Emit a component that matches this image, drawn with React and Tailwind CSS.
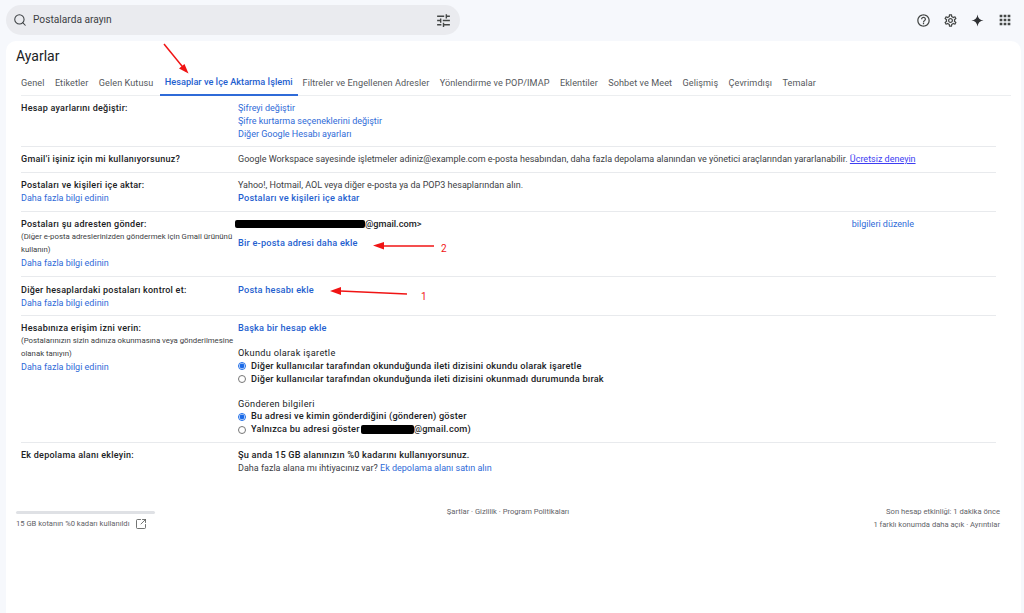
import { Search, SquareArrowOutUpRight } from 'lucide-react';
import { MdApps, MdOutlineHelpOutline, MdOutlineSettings, MdTune } from 'react-icons/md';

const tabs = [
  'Genel',
  'Etiketler',
  'Gelen Kutusu',
  'Hesaplar ve İçe Aktarma İşlemi',
  'Filtreler ve Engellenen Adresler',
  'Yönlendirme ve POP/IMAP',
  'Eklentiler',
  'Sohbet ve Meet',
  'Gelişmiş',
  'Çevrimdışı',
  'Temalar',
];

const Learn = () => <div className="text-[#2f6bd8]">Daha fazla bilgi edinin</div>;

const Label = ({ children }) => <div className="font-medium tracking-[0.25px] text-[#202124]">{children}</div>;

const Note = ({ children }) => <div className="text-[7.8px] text-[#3c4043]">{children}</div>;

const Action = ({ children }) => <div className="text-[9.2px] font-medium tracking-[0.2px] text-[#1f5fcf]">{children}</div>;

const Heading = ({ children }) => <div className="mt-[12px] text-[9.2px] tracking-[0.3px] text-[#202124]">{children}</div>;

const Row = ({ left, children, className }) => (
  <div className={`grid grid-cols-[217px_1fr] ${className || 'border-b border-[#e8eaed] py-[6px]'}`}>
    <div>{left}</div>
    <div>{children}</div>
  </div>
);

const Radio = ({ name, checked, children }) => (
  <label className="flex items-center gap-[5px] text-[9.2px] font-medium tracking-[0.22px] text-[#202124]">
    <input
      type="radio"
      name={name}
      defaultChecked={checked}
      className="m-0 h-[8px] w-[8px] accent-[#1a6ae8]"
    />
    <span>{children}</span>
  </label>
);

export default function App() {
  return (
    <div
      className="relative h-[613px] w-[1024px] overflow-hidden bg-[#f6f8fc] text-[9px] leading-[12.85px] text-[#3c4043]"
      style={{ fontFamily: 'Roboto, "Liberation Sans", sans-serif' }}
    >
      {/* top bar */}
      <div className="flex h-[41px] items-start justify-between pl-[6px] pr-[11px] pt-[5px]">
        <div className="flex h-[30px] w-[454px] items-center rounded-full bg-[#eaebef] pl-[7px] pr-[8px]">
          <Search size={14} strokeWidth={1.8} className="text-[#3c4043]" />
          <span className="ml-[6px] text-[10.2px] text-[#3c4043]">Postalarda arayın</span>
          <MdTune size={17} className="ml-auto text-[#444746]" />
        </div>
        <div className="flex h-[30px] items-center gap-[12px] text-[#444746]">
          <MdOutlineHelpOutline size={15} />
          <MdOutlineSettings size={15} />
          <svg viewBox="0 0 16 16" className="h-[15px] w-[15px] fill-[#2f3134]">
            <path d="M8 1.5C8.4 5.4 10.6 7.6 14.5 8 10.6 8.4 8.4 10.6 8 14.5 7.6 10.6 5.4 8.4 1.5 8 5.4 7.6 7.6 5.4 8 1.5Z" />
          </svg>
          <MdApps size={16} />
        </div>
      </div>

      {/* settings card */}
      <div className="ml-[6px] mr-[3px] h-[572px] rounded-t-[10px] bg-white pr-[10px]">
        <h1 className="pl-[10px] pt-[7px] text-[14px] leading-[17px] text-[#202124]">Ayarlar</h1>

        <div className="ml-[15px] mt-[6px] flex h-[25px] border-b border-[#eceef0] text-[9.1px] tracking-[0.08px]">
          {tabs.map((tab, i) => (
            <div
              key={tab}
              className={
                i === 3
                  ? '-mb-px ml-[-4px] mr-[5px] flex h-[25px] items-center border-b-2 border-[#2f6bd8] px-[5px] text-[9.2px] tracking-[0px] font-medium text-[#1f5fcf]'
                  : 'mr-[10.4px] flex h-[25px] items-center text-[#55585c]'
              }
            >
              {tab}
            </div>
          ))}
        </div>

        <div className="ml-[15px] mr-[15px]">
          <Row className="border-b border-[#e8eaed] pb-[5px] pt-[6px]" left={<Label>Hesap ayarlarını değiştir:</Label>}>
            <div className="text-[#2f6bd8]">Şifreyi değiştir</div>
            <div className="text-[#2f6bd8]">Şifre kurtarma seçeneklerini değiştir</div>
            <div className="text-[#2f6bd8]">Diğer Google Hesabı ayarları</div>
          </Row>

          <Row className="border-b border-[#e8eaed] py-[6.5px]" left={<Label>Gmail'i işiniz için mi kullanıyorsunuz?</Label>}>
            Google Workspace sayesinde işletmeler adiniz@example.com e-posta hesabından, daha fazla depolama alanından ve yönetici araçlarından yararlanabilir.{' '}
            <span className="text-[#3d3df2] underline">Ücretsiz deneyin</span>
          </Row>

          <Row
            left={
              <>
                <Label>Postaları ve kişileri içe aktar:</Label>
                <Learn />
              </>
            }
          >
            <div>Yahoo!, Hotmail, AOL veya diğer e-posta ya da POP3 hesaplarından alın.</div>
            <Action>Postaları ve kişileri içe aktar</Action>
          </Row>

          <Row
            className="border-b border-[#e8eaed] pb-[7px] pt-[6px]"
            left={
              <>
                <Label>Postaları şu adresten gönder:</Label>
                <Note>(Diğer e-posta adreslerinizden göndermek için Gmail ürününü kullanın)</Note>
                <Learn />
              </>
            }
          >
            <div className="flex justify-between pr-[82px]">
              <div className="flex items-center text-[9.2px] font-medium text-[#202124]">
                <span className="ml-[-3px] h-[8px] w-[130px] rounded-[2px] bg-black" />
                <span>@gmail.com&gt;</span>
              </div>
              <span className="text-[#2f6bd8]">bilgileri düzenle</span>
            </div>
            <div className="mt-[6px]">
              <Action>Bir e-posta adresi daha ekle</Action>
            </div>
          </Row>

          <Row
            className="border-b border-[#e8eaed] pb-[5px] pt-[7px]"
            left={
              <>
                <Label>Diğer hesaplardaki postaları kontrol et:</Label>
                <Learn />
              </>
            }
          >
            <Action>Posta hesabı ekle</Action>
          </Row>

          <Row
            left={
              <>
                <Label>Hesabınıza erişim izni verin:</Label>
                <Note>(Postalarınızın sizin adınıza okunmasına veya gönderilmesine olanak tanıyın)</Note>
                <Learn />
              </>
            }
          >
            <Action>Başka bir hesap ekle</Action>
            <Heading>Okundu olarak işaretle</Heading>
            <Radio name="read" checked>
              Diğer kullanıcılar tarafından okunduğunda ileti dizisini okundu olarak işaretle
            </Radio>
            <Radio name="read">
              Diğer kullanıcılar tarafından okunduğunda ileti dizisini okunmadı durumunda bırak
            </Radio>
            <Heading>Gönderen bilgileri</Heading>
            <Radio name="sender" checked>
              Bu adresi ve kimin gönderdiğini (gönderen) göster
            </Radio>
            <Radio name="sender">
              <span className="flex items-center">
                Yalnızca bu adresi göster
                <span className="ml-[1px] h-[9px] w-[53px] rounded-[2px] bg-black" />
                @gmail.com)
              </span>
            </Radio>
          </Row>

          <Row className="py-[6px]" left={<Label>Ek depolama alanı ekleyin:</Label>}>
            <div className="text-[9.2px] font-medium tracking-[0.2px] text-[#202124]">Şu anda 15 GB alanınızın %0 kadarını kullanıyorsunuz.</div>
            <div>
              Daha fazla alana mı ihtiyacınız var? <span className="text-[#2f6bd8]">Ek depolama alanı satın alın</span>
            </div>
          </Row>
        </div>

        {/* footer */}
        <div className="mt-[25px] grid grid-cols-[1fr_auto_1fr] pl-[10px] pr-[11px] text-[7.6px] text-[#5f6368]">
          <div>
            <div className="mt-[5px] h-[3px] w-[139px] rounded-full bg-[#dfe1e5]" />
            <div className="mt-[4px] flex items-center gap-[5px]">
              <span>15 GB kotanın %0 kadarı kullanıldı</span>
              <SquareArrowOutUpRight size={12} strokeWidth={1.5} className="text-[#444746]" />
            </div>
          </div>
          <div>Şartlar · Gizlilik · Program Politikaları</div>
          <div className="text-right">
            <div>Son hesap etkinliği: 1 dakika önce</div>
            <div>1 farklı konumda daha açık · Ayrıntılar</div>
          </div>
        </div>
      </div>

      {/* red annotations */}
      <svg className="pointer-events-none absolute left-0 top-0 h-[613px] w-[1024px]" viewBox="0 0 1024 613" fill="none">
        <path d="M164 44 186 71" stroke="#f01414" strokeWidth="1.5" />
        <path d="M188.5 73.5 179 68.5 184.5 64Z" fill="#f01414" />
        <path d="M407 294 340 291" stroke="#f01414" strokeWidth="1.5" />
        <path d="M330 291 341 287 341 295Z" fill="#f01414" />
        <path d="M434 246 384 246" stroke="#f01414" strokeWidth="1.5" />
        <path d="M373 245.5 384 242 384 249.5Z" fill="#f01414" />
      </svg>
      <span className="absolute left-[421px] top-[290px] text-[10px] leading-[13px] text-[#f01414]">1</span>
      <span className="absolute left-[441px] top-[242px] text-[10px] leading-[13px] text-[#f01414]">2</span>
    </div>
  );
}
